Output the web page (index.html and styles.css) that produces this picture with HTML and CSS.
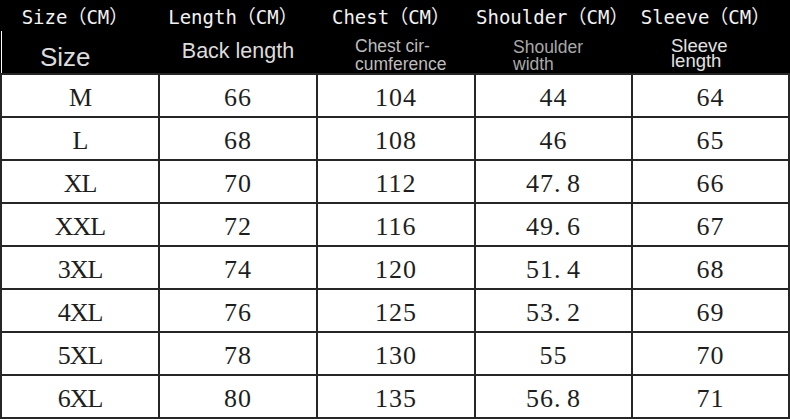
FILE: index.html
```html
<!DOCTYPE html>
<html>
<head>
<meta charset="utf-8">
<link rel="stylesheet" href="styles.css">
</head>
<body>
<div class="chart">
  <div class="header">
    <div class="h1">Size（CM）</div>
    <div class="h1">Length（CM）</div>
    <div class="h1">Chest（CM）</div>
    <div class="h1">Shoulder（CM）</div>
    <div class="h1">Sleeve（CM）</div>
    <div class="h2 size">Size</div>
    <div class="h2 back">Back length</div>
    <div class="h2 chest">Chest cir-<br>cumference</div>
    <div class="h2 shoulder">Shoulder<br>width</div>
    <div class="h2 sleeve">Sleeve<br>length</div>
  </div>
  <div class="grid">
    <div class="c s">M</div><div class="c">66</div><div class="c">104</div><div class="c">44</div><div class="c">64</div>
    <div class="c s">L</div><div class="c">68</div><div class="c">108</div><div class="c">46</div><div class="c">65</div>
    <div class="c s">XL</div><div class="c">70</div><div class="c">112</div><div class="c">47<span class="dot">.</span>8</div><div class="c">66</div>
    <div class="c s">XXL</div><div class="c">72</div><div class="c">116</div><div class="c">49<span class="dot">.</span>6</div><div class="c">67</div>
    <div class="c s">3XL</div><div class="c">74</div><div class="c">120</div><div class="c">51<span class="dot">.</span>4</div><div class="c">68</div>
    <div class="c s">4XL</div><div class="c">76</div><div class="c">125</div><div class="c">53<span class="dot">.</span>2</div><div class="c">69</div>
    <div class="c s">5XL</div><div class="c">78</div><div class="c">130</div><div class="c">55</div><div class="c">70</div>
    <div class="c s">6XL</div><div class="c">80</div><div class="c">135</div><div class="c">56<span class="dot">.</span>8</div><div class="c">71</div>
  </div>
</div>
</body>
</html>
```
FILE: styles.css
```css
html, body {
  margin: 0;
  padding: 0;
  background: #fff;
}
.chart {
  width: 790px;
  height: 419px;
  overflow: hidden;
}
.header {
  background: #000;
  height: 73px;
  display: grid;
  grid-template-columns: 156px 156px 156px 155px 155px;
  grid-template-rows: 31px 42px;
  column-gap: 2px;
  padding: 0 2px;
  box-sizing: border-box;
}
.h1 {
  color: #f2f2f2;
  font-family: "DejaVu Sans Mono", "Noto Sans CJK SC", monospace;
  font-size: 19px;
  line-height: 28px;
  padding-top: 3px;
  padding-right: 10px;
  text-align: center;
  white-space: nowrap;
}
.h2 {
  font-family: "Liberation Sans", Arial, sans-serif;
  white-space: nowrap;
}
.size {
  color: #dcdcdc;
  font-size: 26px;
  line-height: 30px;
  padding: 11px 0 0 38px;
  box-shadow: -1px 0 0 #fff;
}
.back {
  color: #dcdcdc;
  font-size: 21.5px;
  line-height: 24px;
  padding-top: 8px;
  text-align: center;
}
.chest {
  color: #bdbdbd;
  font-size: 17.5px;
  line-height: 18px;
  padding: 6px 0 0 37px;
}
.shoulder {
  color: #a9a9a9;
  font-size: 17.5px;
  line-height: 16.5px;
  padding: 8px 0 0 37px;
}
.sleeve {
  color: #e2e2e2;
  font-size: 18.5px;
  line-height: 14.5px;
  padding: 8px 0 0 38px;
}
.grid {
  display: grid;
  grid-template-columns: 156px 156px 156px 155px 155px;
  grid-auto-rows: 41px;
  gap: 2px;
  padding: 2px;
  background: #262626;
}
.c {
  background: #fff;
  color: #1e1e1e;
  font-family: "Liberation Serif", "Times New Roman", serif;
  font-size: 26px;
  letter-spacing: 1px;
  line-height: 37px;
  padding-top: 4px;
  text-align: center;
  white-space: nowrap;
}
.c.s {
  letter-spacing: -1px;
}
.dot {
  display: inline-block;
  width: 0.5em;
  text-align: left;
}
```
